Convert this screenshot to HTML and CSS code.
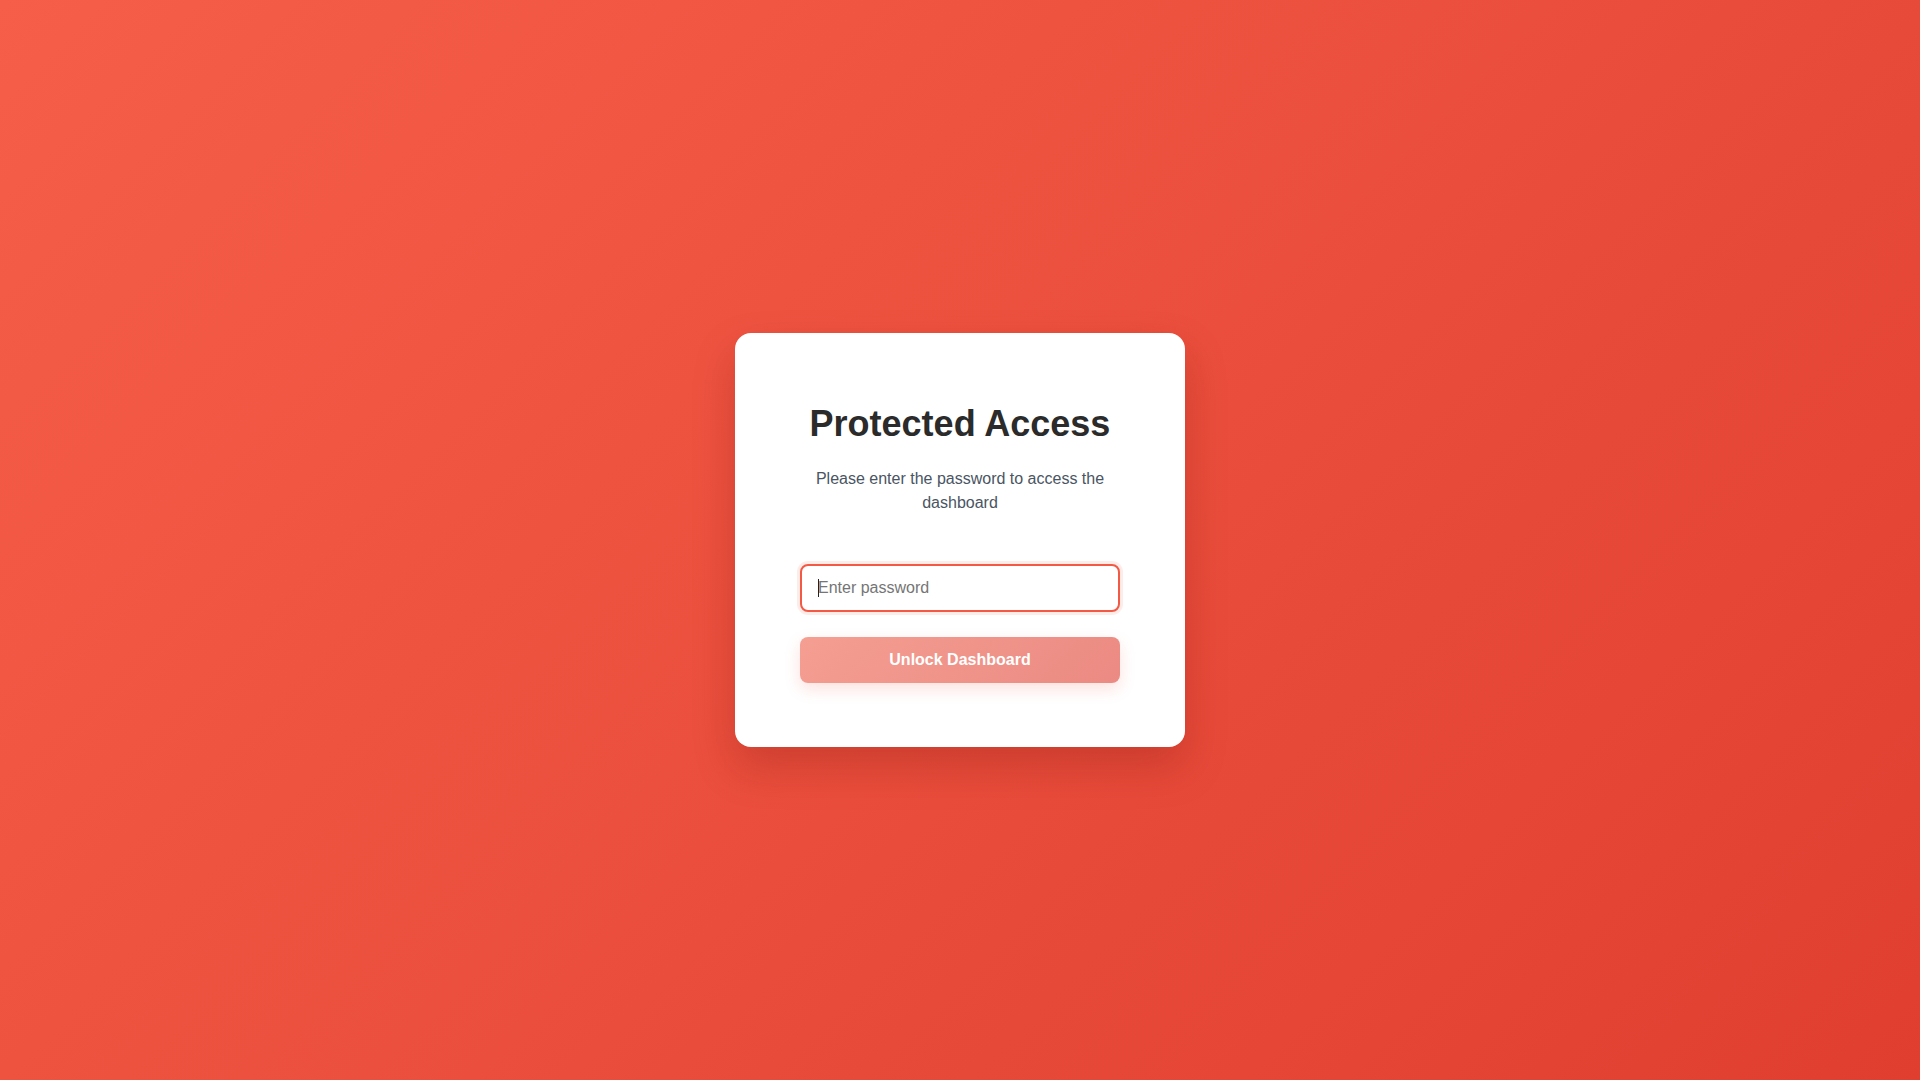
FILE: index.html
```html
<!DOCTYPE html>
<html lang="en">
<head>
<meta charset="utf-8">
<title>Protected Access</title>
<link rel="stylesheet" href="styles.css">
</head>
<body>
<main class="page">
  <form class="card" onsubmit="return false;">
    <h1 class="title">Protected Access</h1>
    <p class="subtitle">Please enter the password to access the dashboard</p>
    <div class="field-wrap">
      <input class="field" type="password" placeholder="Enter password" autofocus>
      <span class="caret"></span>
    </div>
    <button class="btn" type="submit" disabled>Unlock Dashboard</button>
  </form>
</main>
</body>
</html>
```

FILE: styles.css
```css
* { box-sizing: border-box; }
html, body { margin: 0; height: 100%; }
body {
  font-family: "Liberation Sans", Arial, sans-serif;
  background: linear-gradient(135deg, #f65e49 0%, #e03f30 100%);
}
.page {
  min-height: 100vh;
  display: flex;
  align-items: center;
  justify-content: center;
}
.card {
  width: 450px;
  background: #fff;
  border-radius: 16px;
  padding: 64px 65px;
  text-align: center;
  box-shadow: 0 20px 40px rgba(120, 20, 10, 0.25);
  display: flex;
  flex-direction: column;
}
.title {
  margin: 5px 0 0;
  font-size: 36px;
  line-height: 1.2;
  font-weight: 700;
  color: #2b2b2b;
}
.subtitle {
  margin: 21px 0 0;
  font-size: 16px;
  line-height: 24px;
  color: #4a5563;
}
.field-wrap {
  position: relative;
  margin-top: 49px;
}
.field {
  display: block;
  height: 48px;
  width: 100%;
  border: 2px solid #f25a45;
  border-radius: 8px;
  padding: 0 16px;
  font-family: inherit;
  font-size: 16px;
  color: #333;
  outline: none;
  caret-color: transparent;
  box-shadow: 0 0 0 3px rgba(245, 96, 74, 0.12);
}
.field::placeholder { color: #757575; }
.caret {
  position: absolute;
  left: 18px;
  top: 15px;
  width: 1px;
  height: 18px;
  background: #222;
}
.btn {
  margin-top: 25px;
  height: 46px;
  width: 100%;
  border: none;
  border-radius: 8px;
  background: linear-gradient(135deg, #f59e92 0%, #eb8a82 100%);
  color: #fff;
  font-family: inherit;
  font-size: 16px;
  font-weight: 700;
  box-shadow: 0 6px 16px rgba(240, 90, 70, 0.18);
}
```
